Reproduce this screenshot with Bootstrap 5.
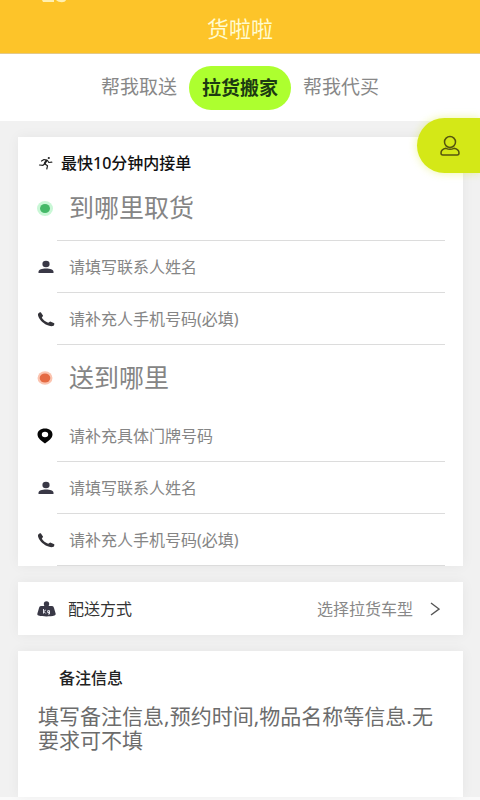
<!DOCTYPE html>
<html lang="zh-CN">
<head>
<meta charset="utf-8">
<meta name="viewport" content="width=device-width, initial-scale=1">
<title>货啦啦</title>
<link rel="stylesheet" href="https://cdn.jsdelivr.net/npm/bootstrap@5.3.0/dist/css/bootstrap.min.css">
<style>
body { font-family: "Noto Sans", "Noto Sans CJK SC", sans-serif; font-size: 16px; line-height: 24px; color: #222; background: #f1f1f1; }
.page { min-height: 100vh; border-bottom: 3px solid #fafafa; }
.app-header { background: #fdc429; height: 54px; border-bottom: 1px solid #e3c98a; }
.app-title { font-size: 22px; line-height: 28px; padding-top: 14px; color: #fffbd0; font-weight: 400; }
.status-clip { top: 0; left: 41px; }
.tabs { height: 67px; gap: 12px; }
.tab-btn { border: 0; background: none; color: #888; font-size: 19px; line-height: 28px; padding: 0 0 2px; }
.tab-btn.active { background: #adff2f; color: #1d3b12; font-weight: 700; padding: 8px 13px; border-radius: 22px; }
.user-fab { top: 118px; right: 0; width: 63px; height: 55px; border: 0; padding: 0 0 0 3px; border-radius: 28px 0 0 28px; background: #d4e817; box-shadow: 0 0 8px #d4e81766; }
.content { padding: 16px 17px 0 18px; gap: 16px; }
.panel { background: #fff; box-shadow: 0 0 12px #0000000d; }
.panel-title { padding: 12px 20px 0; height: 39px; gap: 7px; font-size: 16px; font-weight: 500; color: #111; }
.line { height: 52px; padding-right: 18px; }
.line.place { height: 65px; }
.line-icon { width: 39px; padding-left: 18px; flex: none; }
.line input { min-width: 0; border: 0; border-bottom: 1px solid #dcdcdc; border-radius: 0; background: none; padding: 0 0 0 12px; outline: 0; color: #333; font-size: 16px; }
.line.place input { font-size: 25px; padding-bottom: 2px; }
.line.open input { border-bottom-color: transparent; padding-bottom: 0; }
input::placeholder, textarea::placeholder { color: #858585; opacity: 1; }
.way { height: 53px; border: 0; padding: 0 23px 0 19px; font-size: 16px; color: #333; }
.way-value { color: #888; margin-right: 17px; }
.note { padding: 15px 19px 0 20px; }
.note label { padding-left: 21px; font-weight: 500; color: #222; }
.note textarea { border: 0; outline: 0; resize: none; padding: 0; margin-top: 14px; height: 93px; font-size: 21px; line-height: 24px; }
.note textarea::placeholder { color: #6c6c6c; }
</style>
<script src="https://cdn.jsdelivr.net/npm/bootstrap@5.3.0/dist/js/bootstrap.bundle.min.js"></script>
</head>
<body>
<svg class="d-none" aria-hidden="true">
  <symbol id="person" viewBox="0 0 16 14"><ellipse cx="8" cy="4" rx="3.600" ry="3.300"/><path d="M.5 13v-1.200C.5 9.700 4 8.600 8 8.600s7.500 1.100 7.500 3.200V13z"/></symbol>
  <symbol id="phone" viewBox="0 0 17 15"><path d="M.8 1.500C1.500.6 2.500.2 3.300.3l2.300 3.400-1.300 2c1.400 2.300 3.600 4 6.400 5l2-1.100 4.100 1.600c.1 1-.1 1.900-.7 2.600-1.700.7-4.200.5-6.600-.7C4.900 11 1.200 6.700.5 3.300c-.1-.7 0-1.300.3-1.800z"/></symbol>
</svg>
<div class="page position-relative">
  <header class="app-header text-center">
    <svg class="status-clip position-absolute" width="26" height="4" viewBox="0 0 26 4" aria-hidden="true"><path d="M1 0h12v2H2zM15 0h10c-1 3-7 3-10 0z" fill="#fff0b0"/></svg>
    <h1 class="app-title m-0">货啦啦</h1>
  </header>
  <nav class="tabs bg-white d-flex justify-content-center align-items-center" aria-label="服务">
    <button type="button" class="tab-btn">帮我取送</button>
    <button type="button" class="tab-btn active" aria-current="page">拉货搬家</button>
    <button type="button" class="tab-btn">帮我代买</button>
  </nav>
  <button type="button" class="user-fab position-absolute d-flex align-items-center justify-content-center" aria-label="我的">
    <svg width="22" height="22" viewBox="0 0 22 22" fill="none" stroke="#55550f" stroke-width="1.500"><circle cx="11" cy="7" r="5.500"/><path d="M7 13.300c-3 .6-5 2.400-5 4.700 0 1.400.6 2 1.800 2h14.400c1.200 0 1.800-.6 1.800-2 0-2.300-2-4.100-5-4.700-2.500 1.300-5.500 1.300-8 0z"/></svg>
  </button>

  <main class="content d-flex flex-column">
    <form class="panel">
      <div class="panel-title d-flex align-items-center">
        <svg width="16" height="14" viewBox="0 0 16 14" fill="none" stroke="#222" stroke-width="1.200" stroke-linecap="round" stroke-linejoin="round" aria-hidden="true"><circle cx="10.800" cy="2" r="1.100" fill="#222" stroke="none"/><path d="M3.500 5 6 3.500l2.800.7L6.500 8 5 9.300 1.500 9M7 8l2.500 1.800L8.800 13M9.500 4.500l1.300 2 3-.3"/><path d="M8.300 4.800 6.800 7.300" stroke-width="2"/></svg>
        <span>最快10分钟内接单</span>
      </div>
      <div class="line place d-flex align-items-center">
        <label class="line-icon d-flex" for="from"><svg width="18" height="18" viewBox="0 0 18 18" role="img" aria-label="取货地"><ellipse cx="9" cy="8.500" rx="8" ry="7.500" fill="#c9f7d6"/><ellipse cx="9" cy="8.500" rx="5" ry="4.500" fill="#45b968"/></svg></label>
        <input class="w-100 h-100" id="from" type="text" placeholder="到哪里取货">
      </div>
      <div class="line d-flex align-items-center">
        <label class="line-icon d-flex" for="n1"><svg width="20" height="14" fill="#393846" role="img" aria-label="联系人"><use href="#person"/></svg></label>
        <input class="w-100 h-100" id="n1" type="text" placeholder="请填写联系人姓名">
      </div>
      <div class="line d-flex align-items-center">
        <label class="line-icon d-flex" for="t1"><svg width="20" height="15" fill="#333238" role="img" aria-label="手机"><use href="#phone"/></svg></label>
        <input class="w-100 h-100" id="t1" type="tel" placeholder="请补充人手机号码(必填)">
      </div>
      <div class="line place open d-flex align-items-center">
        <label class="line-icon d-flex" for="to"><svg width="18" height="18" viewBox="0 0 18 18" role="img" aria-label="送货地"><ellipse cx="9" cy="9" rx="7.500" ry="6.700" fill="#fbc4b0"/><ellipse cx="9" cy="9" rx="5.300" ry="4.500" fill="#e56a43"/></svg></label>
        <input class="w-100 h-100" id="to" type="text" placeholder="送到哪里">
      </div>
      <div class="line d-flex align-items-center">
        <label class="line-icon d-flex" for="door"><svg width="20" height="16" viewBox="2 0 20 16" role="img" aria-label="门牌号"><path fill="#050505" fill-rule="evenodd" d="M11 .5c-4.500 0-7.500 2.500-7.500 6 0 3.800 4 6.500 7.500 9 3.500-2.500 7.500-5.200 7.500-9 0-3.500-3-6-7.500-6zm0 3.200a3.200 2.800 0 1 1 0 5.600 3.200 2.800 0 1 1 0-5.600z"/></svg></label>
        <input class="w-100 h-100" id="door" type="text" placeholder="请补充具体门牌号码">
      </div>
      <div class="line d-flex align-items-center">
        <label class="line-icon d-flex" for="n2"><svg width="20" height="14" fill="#393846" role="img" aria-label="联系人"><use href="#person"/></svg></label>
        <input class="w-100 h-100" id="n2" type="text" placeholder="请填写联系人姓名">
      </div>
      <div class="line d-flex align-items-center">
        <label class="line-icon d-flex" for="t2"><svg width="20" height="15" fill="#333238" role="img" aria-label="手机"><use href="#phone"/></svg></label>
        <input class="w-100 h-100" id="t2" type="tel" placeholder="请补充人手机号码(必填)">
      </div>
    </form>

    <button type="button" class="panel way d-flex align-items-center w-100">
      <svg class="me-2" width="19" height="16" viewBox="0 0 19 16" aria-hidden="true"><circle cx="9.500" cy="3" r="2.700" fill="#393846"/><path d="M4 5h11c1.200 0 1.600.8 2 2l1.600 5.500c.3 1-.1 1.700-1.200 2-4 1.200-11.800 1.200-15.800 0-1.100-.3-1.500-1-1.200-2L2 7c.4-1.200.8-2 2-2z" fill="#393846"/><path d="M6.500 8v4.500M8.800 9l-2 1.500 2 2M12.500 9.500v3.500h-1.500M12.300 9.700h-1.600v1.800h1.600" stroke="#e8e8f0" fill="none"/></svg>
      <span class="ms-1">配送方式</span>
      <span class="way-value ms-auto">选择拉货车型</span>
      <svg width="10" height="14" viewBox="0 0 10 14" fill="none" stroke="#555" stroke-width="1.400" aria-hidden="true"><path d="m1 1 8 6-8 6"/></svg>
    </button>

    <section class="panel note">
      <label class="d-block" for="memo">备注信息</label>
      <textarea class="d-block w-100" id="memo" placeholder="填写备注信息,预约时间,物品名称等信息.无要求可不填"></textarea>
    </section>
  </main>
</div>
</body>
</html>
